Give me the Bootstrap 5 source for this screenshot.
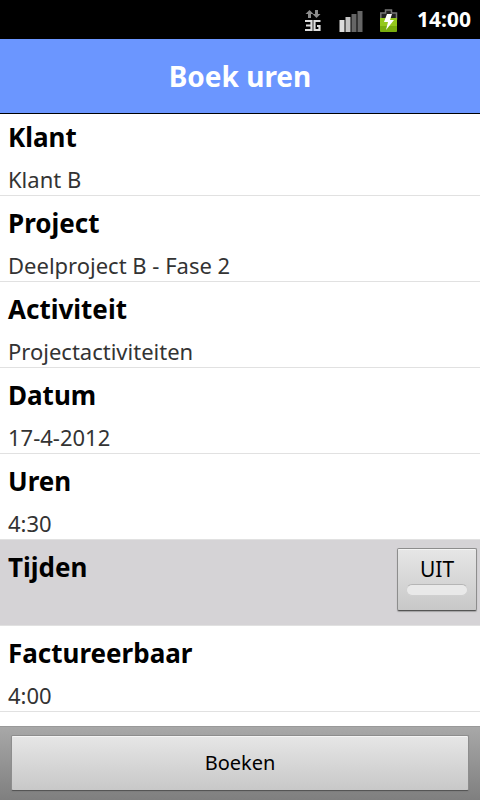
<!DOCTYPE html>
<html lang="nl">
<head>
<meta charset="utf-8">
<meta name="viewport" content="width=device-width, initial-scale=1">
<title>Boek uren</title>
<link href="https://cdn.jsdelivr.net/npm/bootstrap@5.3.0/dist/css/bootstrap.min.css" rel="stylesheet">
<style>
  body { font-family: "Noto Sans", "Open Sans", sans-serif; color: #000; }
  .status-bar { height: 39px; background: #000; color: #fff; font-size: 21px; font-weight: 700; padding: 0 9px; gap: 14px; }
  .status-bar time { padding-top: 1px; }
  .title-bar { height: 75px; background: #6b96ff; border-bottom: 1px solid #000; }
  .title-bar h1 { font-size: 28px; font-weight: 700; line-height: 36px; color: #fff; }
  .entry { height: 86px; padding: 9px 8px 0; border-bottom: 1px solid #e1e1e1; }
  .entry:first-child { height: 82px; padding-top: 5px; }
  .entry h2 { font-size: 26px; font-weight: 700; line-height: 36px; margin: 0 0 6px; }
  .entry p { font-size: 22px; line-height: 36px; margin: 0; color: #333; }
  .entry-shaded { background: #d5d3d6; border-bottom-color: #e1e1e1; padding-right: 3px; }
  .droid-btn { border: 1px solid #8d8d8d; border-bottom-color: #555; border-radius: 2px; color: #000;
    background: linear-gradient(#e6e6e6, #c8c8c8); box-shadow: inset 0 1px 0 #f4f4f4, 0 1px 1px #7778; }
  .toggle-btn { width: 80px; height: 63px; margin-top: -1px; font-size: 21px; line-height: 26px; padding: 0 8px 7px; }
  .toggle-light { height: 12px; margin-top: 2px; border-radius: 6px; background: #e9e9e9; border: 1px solid #d0d0d0; border-top-color: #b5b5b5; }
  .action-bar { height: 74px; padding: 8px 11px; background: linear-gradient(#a8a8a8, #7f7f7f); border-top: 1px solid #999; }
  .action-btn { height: 56px; font-size: 20px; }
</style>
<script src="https://cdn.jsdelivr.net/npm/bootstrap@5.3.0/dist/js/bootstrap.bundle.min.js"></script>
</head>
<body class="d-flex flex-column min-vh-100 bg-white">
<div class="status-bar d-flex align-items-center justify-content-end">
  <svg width="102" height="38" viewBox="0 0 102 38" role="img" aria-label="3G, signaal, batterij laadt op">
    <g fill="#8c8c8c"><path d="M8.500 9l4 4h-2.500v4H7v-4H4.500z"/><path d="M14 9h3v4h2.500l-4 4-4-4H14z"/></g>
    <path d="M4 20h6.500v9H4M5 24.500h5M19.500 20H13.500v9h5v-4H16" fill="none" stroke="#ddd" stroke-width="2.200"/>
    <path d="M38.500 19h5v12h-5z" fill="#ddd"/><path d="M44.500 16h5v15h-5z" fill="#c4c4c4"/>
    <path d="M50.500 13h5v18h-5zM56.500 10h5v21h-5z" fill="#666"/>
    <path d="M84.500 9h6v3h5v6H79.800v-6h4.700z" fill="#222" stroke="#777" stroke-width="1.500"/>
    <path d="M79 17h17v13l-1 1H80l-1-1z" fill="#94c81c"/><path d="M79 25h17v5l-1 1H80l-1-1z" fill="#79ad0d"/>
    <path d="M86 13h5l-2 6h4l-8 10 2-8h-4z" fill="#fff"/>
  </svg>
  <time datetime="14:00">14:00</time>
</div>
<header class="title-bar d-flex align-items-center justify-content-center">
  <h1 class="m-0">Boek uren</h1>
</header>
<main class="flex-grow-1">
  <section class="entry"><h2>Klant</h2><p>Klant B</p></section>
  <section class="entry"><h2>Project</h2><p>Deelproject B - Fase 2</p></section>
  <section class="entry"><h2>Activiteit</h2><p>Projectactiviteiten</p></section>
  <section class="entry"><h2>Datum</h2><p>17-4-2012</p></section>
  <section class="entry"><h2>Uren</h2><p>4:30</p></section>
  <section class="entry entry-shaded d-flex justify-content-between align-items-start">
    <h2 id="times-label">Tijden</h2>
    <button type="button" class="droid-btn toggle-btn" aria-pressed="false" aria-describedby="times-label">UIT<span class="toggle-light d-block"></span></button>
  </section>
  <section class="entry"><h2>Factureerbaar</h2><p>4:00</p></section>
</main>
<footer class="action-bar">
  <button type="button" class="droid-btn action-btn w-100">Boeken</button>
</footer>
</body>
</html>
